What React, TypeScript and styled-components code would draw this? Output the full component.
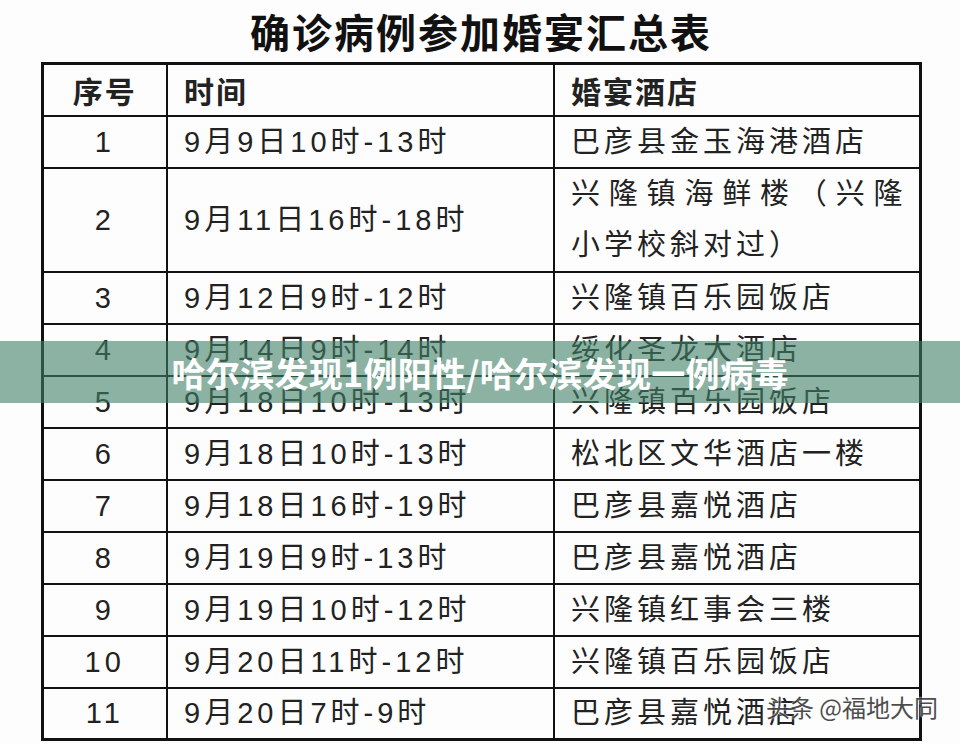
import React from 'react';
import styled, { createGlobalStyle } from 'styled-components';

const GlobalStyle = createGlobalStyle`
  html, body {
    margin: 0;
    padding: 0;
    background: #fdfdfd;
  }
  body {
    font-family: "Liberation Sans", "Noto Sans CJK SC", sans-serif;
    color: #1f1f1f;
  }
`

const Page = styled.div`
  position: relative;
  width: 960px;
  height: 744px;
  overflow: hidden;
  display: flex;
  flex-direction: column;
  align-items: center;
`

const Title = styled.h1`
  margin: 0;
  height: 62px;
  display: flex;
  align-items: center;
  justify-content: center;
  font-family: "Noto Sans CJK SC", sans-serif;
  font-size: 40px;
  font-weight: 700;
  letter-spacing: 2px;
  color: #111;
  padding-left: 2px;
`

const Table = styled.table`
  width: 878px;
  margin-left: 2px;
  border-collapse: collapse;
  table-layout: fixed;
  border: 3px solid #111;
`

const Row = styled.tr<{ $tall?: boolean }>`
  height: ${p => (p.$tall ? 102 : 52)}px;
`

const Cell = styled.td<{ $center?: boolean; $tall?: boolean }>`
  border: 2px solid #111;
  padding: 0 16px;
  text-align: ${p => (p.$center ? 'center' : 'left')};
  vertical-align: middle;
  font-family: "Liberation Sans", "Noto Sans CJK SC", sans-serif;
  font-size: 29px;
  font-weight: 400;
  letter-spacing: 4px;
  color: #222;
  white-space: nowrap;
  line-height: ${p => (p.$tall ? 51 : 38)}px;
`

const HeadCell = styled(Cell).attrs({ as: 'th' })`
  font-family: "Noto Sans CJK SC", sans-serif;
  font-weight: 700;
  font-size: 30px;
  letter-spacing: 2px;
  color: #222;
`

const Justified = styled.span`
  display: block;
  text-align: justify;
  text-align-last: justify;
  letter-spacing: 0;
`

const Banner = styled.div`
  position: absolute;
  left: 0;
  right: 0;
  top: 341px;
  height: 62px;
  background: rgba(64, 128, 104, 0.6);
  display: flex;
  align-items: center;
  justify-content: center;
  font-family: "Noto Sans CJK SC", sans-serif;
  font-weight: 700;
  font-size: 34px;
  color: #fff;
  letter-spacing: 0.3px;
`

const Watermark = styled.div`
  position: absolute;
  right: 22px;
  bottom: 20px;
  font-family: "Noto Sans CJK SC", sans-serif;
  font-size: 24px;
  color: #3a3a3a;
  text-shadow: 0 0 2px #fff, 0 0 2px #fff;
  opacity: 0.9;
`

type Item = { no: number; time: string; hotel: string[] };

const rows: Item[] = [
  { no: 1, time: '9月9日10时-13时', hotel: ['巴彦县金玉海港酒店'] },
  { no: 2, time: '9月11日16时-18时', hotel: ['兴隆镇海鲜楼（兴隆', '小学校斜对过）'] },
  { no: 3, time: '9月12日9时-12时', hotel: ['兴隆镇百乐园饭店'] },
  { no: 4, time: '9月14日9时-14时', hotel: ['绥化圣龙大酒店'] },
  { no: 5, time: '9月18日10时-13时', hotel: ['兴隆镇百乐园饭店'] },
  { no: 6, time: '9月18日10时-13时', hotel: ['松北区文华酒店一楼'] },
  { no: 7, time: '9月18日16时-19时', hotel: ['巴彦县嘉悦酒店'] },
  { no: 8, time: '9月19日9时-13时', hotel: ['巴彦县嘉悦酒店'] },
  { no: 9, time: '9月19日10时-12时', hotel: ['兴隆镇红事会三楼'] },
  { no: 10, time: '9月20日11时-12时', hotel: ['兴隆镇百乐园饭店'] },
  { no: 11, time: '9月20日7时-9时', hotel: ['巴彦县嘉悦酒店'] },
];

export default function App() {
  return (
    <Page>
      <GlobalStyle />
      <Title>确诊病例参加婚宴汇总表</Title>
      <Table>
        <colgroup>
          <col style={{ width: 125 }} />
          <col style={{ width: 387 }} />
          <col style={{ width: 366 }} />
        </colgroup>
        <thead>
          <Row>
            <HeadCell $center>序号</HeadCell>
            <HeadCell>时间</HeadCell>
            <HeadCell>婚宴酒店</HeadCell>
          </Row>
        </thead>
        <tbody>
          {rows.map(r => {
            const tall = r.hotel.length > 1;
            return (
              <Row key={r.no} $tall={tall}>
                <Cell $center>{r.no}</Cell>
                <Cell>{r.time}</Cell>
                <Cell $tall={tall}>
                  {tall ? (
                    <>
                      <Justified>{r.hotel[0]}</Justified>
                      {r.hotel[1]}
                    </>
                  ) : (
                    r.hotel[0]
                  )}
                </Cell>
              </Row>
            );
          })}
        </tbody>
      </Table>
      <Banner>哈尔滨发现1例阳性/哈尔滨发现一例病毒</Banner>
      <Watermark>头条 @福地大同</Watermark>
    </Page>
  );
}
